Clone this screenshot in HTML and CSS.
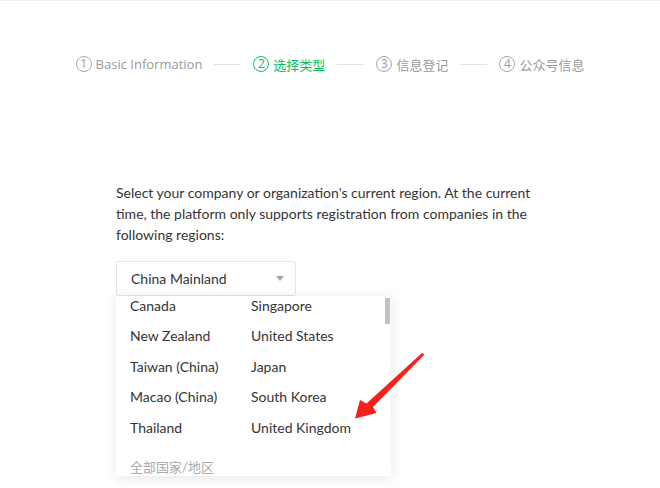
FILE: index.html
```html
<!doctype html>
<html lang="en">
  <head>
    <meta charset="UTF-8" />
    <meta name="viewport" content="width=device-width, initial-scale=1.0" />
    <title>Select Region</title>
    <link rel="stylesheet" href="styles.css">
  </head>
  <body>
    <main class="page">
      <nav class="steps">
        <div class="step"><span class="step-num">1</span><span>Basic Information</span></div>
        <span class="step-line"></span>
        <div class="step step-active"><span class="step-num">2</span><span>选择类型</span></div>
        <span class="step-line"></span>
        <div class="step"><span class="step-num">3</span><span>信息登记</span></div>
        <span class="step-line"></span>
        <div class="step"><span class="step-num">4</span><span>公众号信息</span></div>
      </nav>

      <section class="content">
        <p class="intro-text">
          Select your company or organization's current region. At the current time, the platform only supports registration from companies in the following regions:
        </p>

        <div class="region-select">
          <div class="select-box">
            <span>China Mainland</span>
            <span class="select-arrow"></span>
          </div>

          <div class="dropdown">
            <ul class="region-list">
              <li>Canada</li>
              <li>Singapore</li>
              <li>New Zealand</li>
              <li>United States</li>
              <li>Taiwan (China)</li>
              <li>Japan</li>
              <li>Macao (China)</li>
              <li>South Korea</li>
              <li>Thailand</li>
              <li>United Kingdom</li>
            </ul>
            <div class="dropdown-footer">全部国家/地区</div>
            <span class="scroll-thumb"></span>
          </div>
        </div>
      </section>

      <svg class="red-arrow" width="80" height="72" viewBox="350 350 80 72" aria-hidden="true">
        <polygon points="424.5,353.5 373,406 376.5,412 355,417.5 360,399 366.5,402.5 422,352" fill="#f7201a" />
      </svg>
    </main>
  </body>
</html>
```

FILE: styles.css
```css
* {
  margin: 0;
  padding: 0;
  box-sizing: border-box;
}

body {
  font-family: Lato, "Noto Sans CJK SC", sans-serif;
  background-color: #fff;
  color: #353535;
  font-size: 14px;
}

.page {
  position: relative;
  min-height: 488px;
  border-top: 1px solid #eeeeee;
}

.steps {
  display: flex;
  justify-content: center;
  align-items: center;
  gap: 12px;
  margin-top: 52px;
  height: 22px;
  color: #9a9a9a;
}

.step {
  display: flex;
  align-items: center;
  gap: 4px;
  font-family: "Open Sans", "Noto Sans CJK SC", sans-serif;
  font-size: 13px;
}

.step-num {
  display: flex;
  justify-content: center;
  align-items: center;
  width: 16px;
  height: 16px;
  border: 1px solid #a5a5a5;
  border-radius: 50%;
  font-size: 12px;
  line-height: 1;
}

.step-active {
  color: #07c160;
}

.step-active .step-num {
  border-color: #07c160;
}

.step-line {
  width: 27px;
  height: 1px;
  background-color: #e2e2e2;
}

.content {
  width: 428px;
  margin: 107px auto 0;
}

.intro-text {
  line-height: 21px;
}

.region-select {
  position: relative;
  margin-top: 16px;
}

.select-box {
  display: flex;
  justify-content: space-between;
  align-items: center;
  width: 180px;
  height: 35px;
  padding: 0 11px 0 14px;
  border: 1px solid #e6e6e6;
  border-radius: 2px;
}

.select-arrow {
  width: 0;
  height: 0;
  border-left: 4px solid transparent;
  border-right: 4px solid transparent;
  border-top: 5px solid #a8a8a8;
}

.dropdown {
  position: absolute;
  top: 100%;
  left: 0;
  width: 275px;
  height: 180px;
  overflow: hidden;
  background-color: #fff;
  box-shadow: 0 2px 12px rgba(0, 0, 0, 0.1);
}

.region-list {
  list-style: none;
  display: grid;
  grid-template-columns: 121px 1fr;
  grid-auto-rows: 30.5px;
  align-items: center;
  margin-top: -6px;
  padding-left: 14px;
}

.dropdown-footer {
  margin-top: 14.5px;
  padding-left: 14px;
  line-height: 20px;
  font-size: 13px;
  color: #aaaaaa;
}

.scroll-thumb {
  position: absolute;
  top: 2px;
  right: 1px;
  width: 5px;
  height: 26px;
  background-color: #c1c1c1;
}

.red-arrow {
  position: absolute;
  left: 350px;
  top: 350px;
}
```
